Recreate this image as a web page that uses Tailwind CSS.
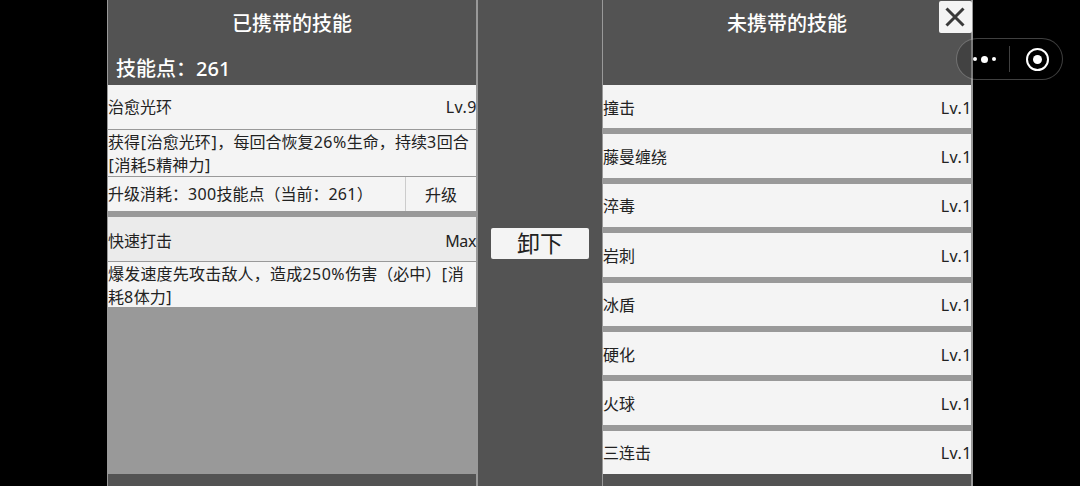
<!DOCTYPE html>
<html lang="zh">
<head>
    <meta charset="UTF-8">
    <title>技能</title>
    <script src="https://cdn.jsdelivr.net/npm/@tailwindcss/browser@4"></script>
</head>
<body class="bg-black overflow-hidden">
    <div class="relative w-[1080px] h-[486px] overflow-hidden text-[16px] text-[#222] font-['Noto_Sans','Noto_Sans_CJK_SC',sans-serif]">
        <div class="ml-[107px] w-[866px] h-[486px] flex bg-[#999]">
            <!-- carried skills -->
            <div class="ml-px w-[368px] h-full flex flex-col bg-[#535353]">
                <div class="h-[85px] shrink-0 text-white">
                    <div class="h-[48px] flex items-center justify-center text-[20px] font-medium">已携带的技能</div>
                    <div class="pl-[8px] h-[37px] text-[20px] leading-[42px] font-medium">技能点：261</div>
                </div>
                <div class="h-[389px] flex flex-col bg-[#999]">
                    <div class="h-[44px] flex items-center justify-between bg-[#f4f4f4]"><span>治愈光环</span><span class="tracking-[0.5px] -mr-px">Lv.9</span></div>
                    <div class="mt-px h-[46px] bg-[#f4f4f4] leading-[23px] pt-px tracking-[0.05px]">获得<span class="px-[0.6px]">[</span>治愈光环<span class="px-[0.6px]">]</span>，每回合恢复<span class="tracking-[0.5px]">26%</span>生命，持续<span class="tracking-[0.5px]">3</span>回合<br><span class="px-[0.6px]">[</span>消耗<span class="tracking-[0.5px]">5</span>精神力<span class="px-[0.6px]">]</span></div>
                    <div class="mt-px h-[34px] flex bg-[#f4f4f4]">
                        <div class="w-[298px] flex items-center border-r border-[#ccc]">升级消耗：<span class="tracking-[0.3px]">300</span>技能点（当前：<span class="tracking-[0.3px]">261</span>）</div>
                        <div class="flex-1 flex items-center justify-center pt-px">升级</div>
                    </div>
                    <div class="mt-[6px] h-[44px] flex items-center justify-between bg-[#ebebeb] pt-[3px]"><span>快速打击</span><span class="tracking-[-0.4px]">Max</span></div>
                    <div class="mt-px h-[45px] bg-[#f4f4f4] leading-[23px] pt-px"><span class="tracking-[0.2px]">爆发速度先攻击敌人，造成</span><span class="tracking-[0.5px]">250%</span>伤害（必中）<span class="px-[0.6px]">[</span>消<br>耗<span class="tracking-[0.5px]">8</span>体力<span class="px-[0.6px]">]</span></div>
                </div>
            </div>
            <!-- middle -->
            <div class="ml-[2px] w-[124px] h-full bg-[#535353] pt-[228px] flex justify-center">
                <div class="w-[98px] h-[31px] bg-[#f4f4f4] rounded-[2px] flex items-center justify-center text-[23px]">卸下</div>
            </div>
            <!-- other skills -->
            <div class="ml-px w-[368px] h-full flex flex-col bg-[#535353]">
                <div class="h-[85px] shrink-0">
                    <div class="h-[48px] flex items-center justify-center text-white text-[20px] font-medium">未携带的技能</div>
                </div>
                <div class="h-[389px] flex flex-col gap-[6px] bg-[#999]">
                    <div class="h-[43.5px] flex items-center justify-between bg-[#f4f4f4] pt-[2px]"><span>撞击</span><span class="tracking-[0.5px] -mr-px">Lv.1</span></div>
                    <div class="h-[43.5px] flex items-center justify-between bg-[#f4f4f4] pt-[2px]"><span>藤曼缠绕</span><span class="tracking-[0.5px] -mr-px">Lv.1</span></div>
                    <div class="h-[43.5px] flex items-center justify-between bg-[#f4f4f4] pt-[2px]"><span>淬毒</span><span class="tracking-[0.5px] -mr-px">Lv.1</span></div>
                    <div class="h-[43.5px] flex items-center justify-between bg-[#f4f4f4] pt-[2px]"><span>岩刺</span><span class="tracking-[0.5px] -mr-px">Lv.1</span></div>
                    <div class="h-[43.5px] flex items-center justify-between bg-[#f4f4f4] pt-[2px]"><span>冰盾</span><span class="tracking-[0.5px] -mr-px">Lv.1</span></div>
                    <div class="h-[43.5px] flex items-center justify-between bg-[#f4f4f4] pt-[2px]"><span>硬化</span><span class="tracking-[0.5px] -mr-px">Lv.1</span></div>
                    <div class="h-[43.5px] flex items-center justify-between bg-[#f4f4f4] pt-[2px]"><span>火球</span><span class="tracking-[0.5px] -mr-px">Lv.1</span></div>
                    <div class="h-[43.5px] flex items-center justify-between bg-[#f4f4f4] pt-[2px]"><span>三连击</span><span class="tracking-[0.5px] -mr-px">Lv.1</span></div>
                </div>
            </div>
        </div>

        <!-- close button -->
        <div class="absolute left-[939px] top-[1px] w-[33px] h-[32px] bg-[#f4f4f4] rounded-[2px] flex items-center justify-center">
            <svg class="mr-px" width="20" height="20" viewBox="0 0 20 20" fill="none" stroke="#3a3a3a" stroke-width="3"><path d="M1.5 1.5L18.5 18.5M18.5 1.5L1.5 18.5"/></svg>
        </div>

        <!-- capsule menu -->
        <div class="absolute left-[956px] top-[38px] w-[107px] h-[42px] rounded-full border border-white/25 bg-black/20 flex items-center">
            <div class="w-[52px] flex items-center justify-center gap-[4px] pl-[3px]">
                <span class="w-[4px] h-[4px] rounded-full bg-white"></span>
                <span class="w-[7px] h-[7px] rounded-full bg-white"></span>
                <span class="w-[4px] h-[4px] rounded-full bg-white"></span>
            </div>
            <div class="w-px h-[26px] bg-white/25"></div>
            <div class="ml-[16px] w-[23px] h-[23px] rounded-full border-2 border-white flex items-center justify-center">
                <span class="w-[9px] h-[9px] rounded-full bg-white"></span>
            </div>
        </div>
    </div>
</body>
</html>
